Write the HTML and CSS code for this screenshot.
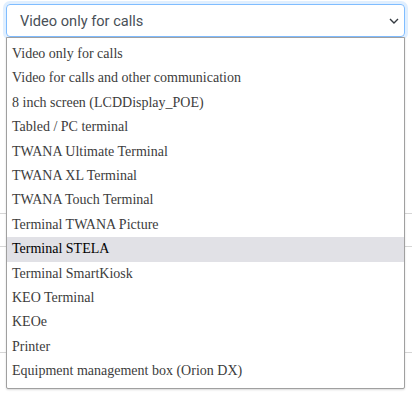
FILE: index.html
```html
<!DOCTYPE html>
<html lang="en">
<head>
    <meta charset="UTF-8">
    <meta name="viewport" content="width=device-width, initial-scale=1.0">
    <title>Terminal type</title>
    <link rel="stylesheet" href="styles.css">
</head>
<body>
    <div class="page">
        <div class="field">
            <div class="select">
                <span class="select-value">Video only for calls</span>
                <svg class="chevron" width="10" height="6" viewBox="0 0 10 6">
                    <path d="M1 1l4 4 4-4" fill="none" stroke="#343a40" stroke-width="1.4"/>
                </svg>
            </div>

            <!-- open option list, drawn over the form below -->
            <ul class="options">
                <li>Video only for calls</li>
                <li>Video for calls and other communication</li>
                <li>8 inch screen (LCDDisplay_POE)</li>
                <li>Tabled / PC terminal</li>
                <li>TWANA Ultimate Terminal</li>
                <li>TWANA XL Terminal</li>
                <li>TWANA Touch Terminal</li>
                <li>Terminal TWANA Picture</li>
                <li class="active">Terminal STELA</li>
                <li>Terminal SmartKiosk</li>
                <li>KEO Terminal</li>
                <li>KEOe</li>
                <li>Printer</li>
                <li>Equipment management box (Orion DX)</li>
            </ul>
        </div>

        <!-- form rows hidden behind the list -->
        <div class="rows">
            <div class="row row-a"></div>
            <div class="row row-b"></div>
            <div class="row row-c"></div>
            <div class="row-end"></div>
        </div>
    </div>
</body>
</html>
```

FILE: styles.css
```css
body {
    margin: 0;
    padding: 0;
    background-color: #fff;
    font-family: "Liberation Serif", "Times New Roman", serif;
}

.page {
    padding: 4px 7px 0 6px;
}

.field {
    position: relative;
}

.select {
    display: flex;
    align-items: center;
    justify-content: space-between;
    height: 31px;
    padding: 0 5px 0 13px;
    border: 1px solid #80bdff;
    border-radius: 4px;
    box-shadow: 0 0 0 3px rgba(0, 123, 255, 0.12);
    font-family: Roboto, "Liberation Sans", Arial, sans-serif;
    font-size: 14.6px;
    color: #495057;
}

.chevron {
    margin-top: 1px;
}

.options {
    position: absolute;
    top: 33px;
    left: 0;
    right: 0;
    z-index: 2;
    list-style: none;
    margin: 0;
    padding: 4px 0;
    background-color: #fff;
    border: 1px solid #a0a0a0;
    border-radius: 0 0 2px 2px;
    box-shadow: 0 1px 2px rgba(0, 0, 0, 0.15);
}

.options li {
    padding: 3px 5px;
    font-size: 14px;
    line-height: 18.4px;
    color: #3c3c3c;
    white-space: nowrap;
}

.options li.active {
    background-color: #e1e1e6;
    color: #000;
}

.rows {
    margin: 0 -7px 0 -6px;
}

.row {
    border-bottom: 1px solid #d6d6d6;
}

.row-a {
    height: 176px;
}

.row-b {
    height: 32px;
}

.row-c {
    height: 105px;
}

.row-end {
    height: 40px;
}
```
